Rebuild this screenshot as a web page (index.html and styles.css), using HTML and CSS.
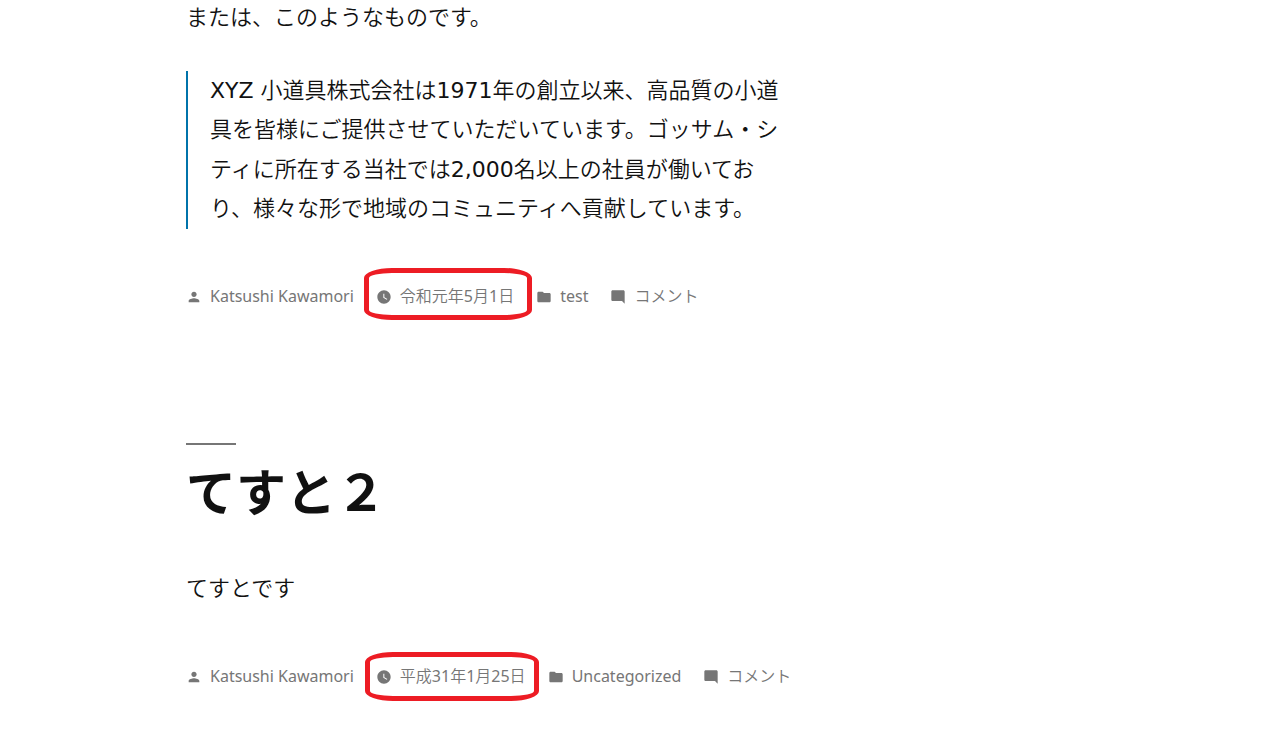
FILE: index.html
```html
<!DOCTYPE html>
<html lang="ja">
<head>
<meta charset="utf-8">
<meta name="viewport" content="width=device-width, initial-scale=1">
<title>てすと２</title>
<link rel="stylesheet" href="styles.css">
</head>
<body>
<svg width="0" height="0" class="sprite" aria-hidden="true">
  <symbol id="person" viewBox="0 0 24 24"><path d="M12 12c2.21 0 4-1.79 4-4s-1.79-4-4-4-4 1.790-4 4 1.790 4 4 4zm0 2c-2.670 0-8 1.340-8 4v2h16v-2c0-2.660-5.330-4-8-4z"/></symbol>
  <symbol id="clock" viewBox="0 0 24 24"><path fill-rule="evenodd" d="M12 2C6.500 2 2 6.500 2 12s4.500 10 10 10 10-4.500 10-10S17.500 2 12 2zm4.200 14.200L11 13V7h1.500v5.200l4.500 2.700-.8 1.300z"/></symbol>
  <symbol id="folder" viewBox="0 0 24 24"><path d="M10 4H4c-1.100 0-2 .9-2 2v12c0 1.100.9 2 2 2h16c1.100 0 2-.9 2-2V8c0-1.100-.9-2-2-2h-8l-2-2z"/></symbol>
  <symbol id="comment" viewBox="0 0 24 24"><path d="M21.990 4c0-1.100-.89-2-1.990-2H4c-1.100 0-2 .9-2 2v12c0 1.100.9 2 2 2h14l4 4-.01-18z"/></symbol>
</svg>
<main class="site-main">
  <article class="entry">
    <div class="entry-content">
      <p>または、このようなものです。</p>
      <blockquote class="quote">
        <p>XYZ 小道具株式会社は1971年の創立以来、高品質の小道具を皆様にご提供させていただいています。ゴッサム・シティに所在する当社では2,000名以上の社員が働いており、様々な形で地域のコミュニティへ貢献しています。</p>
      </blockquote>
    </div>
    <footer class="entry-meta">
      <a class="meta-item" href="#"><svg class="icon"><use href="#person"/></svg>Katsushi Kawamori</a>
      <a class="meta-item marked" href="#"><svg class="icon"><use href="#clock"/></svg><time datetime="2019-05-01">令和元年5月1日</time></a>
      <a class="meta-item" href="#"><svg class="icon"><use href="#folder"/></svg>test</a>
      <a class="meta-item" href="#"><svg class="icon"><use href="#comment"/></svg>コメント</a>
    </footer>
  </article>
  <article class="entry">
    <h2 class="entry-title"><a href="#">てすと２</a></h2>
    <div class="entry-content">
      <p>てすとです</p>
    </div>
    <footer class="entry-meta">
      <a class="meta-item" href="#"><svg class="icon"><use href="#person"/></svg>Katsushi Kawamori</a>
      <a class="meta-item marked marked-tight" href="#"><svg class="icon"><use href="#clock"/></svg><time datetime="2019-01-25">平成31年1月25日</time></a>
      <a class="meta-item" href="#"><svg class="icon"><use href="#folder"/></svg>Uncategorized</a>
      <a class="meta-item" href="#"><svg class="icon"><use href="#comment"/></svg>コメント</a>
    </footer>
  </article>
</main>
</body>
</html>
```
FILE: styles.css
```css
body {
  margin: 0;
  background: #fff;
  color: #111;
  font-family: "DejaVu Sans", "Noto Sans CJK JP DemiLight", "Noto Sans CJK JP", sans-serif;
  font-size: 22px;
  line-height: 1.8;
}
.sprite { position: absolute; }
a { color: inherit; text-decoration: none; }

.site-main {
  display: flex;
  flex-direction: column;
  gap: 134px;
  max-width: 640px;
  margin-left: 186px;
  margin-top: -2px;
  padding-bottom: 60px;
}
.entry-content {
  max-width: 600px;
}
.entry-content p { margin: 0; }

.quote {
  margin: 33px 0 0;
  padding-left: 22px;
  border-left: 2px solid #0073aa;
}

.entry-title {
  margin: 0 0 50px;
  font-family: "Noto Sans CJK JP", sans-serif;
  font-size: 50px;
  font-weight: 700;
  line-height: 60px;
}
.entry-title::before {
  content: "";
  display: block;
  width: 50px;
  height: 2px;
  margin-bottom: 14px;
  background: #767676;
}

.entry-meta {
  display: flex;
  flex-wrap: wrap;
  gap: 22px;
  margin-top: 54px;
  color: #767676;
  font-family: "Noto Sans", "Noto Sans CJK JP DemiLight", "Noto Sans CJK JP", sans-serif;
  font-size: 16px;
  line-height: 26px;
}
.meta-item {
  display: flex;
  align-items: center;
  gap: 8px;
  position: relative;
}
.icon {
  width: 16px;
  height: 16px;
  margin-top: 3px;
  fill: currentColor;
}
.marked::after {
  content: "";
  position: absolute;
  inset: -15px -18px -11px -12px;
  border: 5px solid #ed1c24;
  border-radius: 28px / 10px;
}
.marked-tight::after {
  inset: -11px -13px -12px -11px;
}
```
